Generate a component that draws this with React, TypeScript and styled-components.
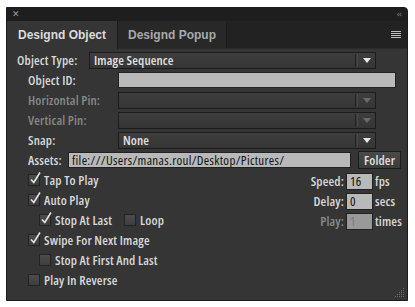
import styled, { createGlobalStyle } from 'styled-components';

const GlobalStyle = createGlobalStyle`
  html, body {
    margin: 0;
    padding: 0;
    background: #ffffff;
  }
  body {
    font-family: "Open Sans", "Liberation Sans", Arial, sans-serif;
    font-stretch: 75%;
  }
`;

const Panel = styled.div`
  position: relative;
  box-sizing: border-box;
  margin: 7px 0 0 6px;
  width: 402px;
  height: 294px;
  background: #353535;
  border: 1px solid #1b1b1b;
  border-top-right-radius: 4px;
  display: flex;
  flex-direction: column;
  overflow: hidden;
`;

const TitleBar = styled.div`
  height: 13px;
  background: #1e1e1e;
  display: flex;
  align-items: center;
  justify-content: space-between;
  padding: 0 6px 0 5px;
  color: #9a9a9a;
  font-family: "DejaVu Sans", sans-serif;
  font-stretch: normal;
  font-size: 9px;
  line-height: 13px;
`;

const Collapse = styled.span`
  font-size: 8px;
  letter-spacing: -1px;
  color: #8a8a8a;
`;

const TabStrip = styled.div`
  height: 27px;
  background: #222222;
  border-bottom: 1px solid #2a2a2a;
  display: flex;
  align-items: stretch;
`;

const Tab = styled.div<{ $active?: boolean; $width: number }>`
  width: ${(p) => p.$width}px;
  box-sizing: border-box;
  display: flex;
  align-items: center;
  justify-content: center;
  font-family: "Liberation Sans", Arial, sans-serif;
  font-stretch: normal;
  font-weight: bold;
  font-size: 12px;
  color: ${(p) => (p.$active ? '#dcdcdc' : '#a8a8a8')};
  background: ${(p) => (p.$active ? '#353535' : '#282828')};
  border-right: 1px solid #1a1a1a;
  margin-bottom: ${(p) => (p.$active ? '-1px' : '0')};
`;

const MenuButton = styled.div`
  margin-left: auto;
  margin-right: 6px;
  align-self: center;
  width: 10px;
  display: flex;
  flex-direction: column;
  gap: 1px;
  span {
    display: block;
    height: 1px;
    background: #bdbdbd;
  }
`;

const Body = styled.div`
  padding-top: 1px;
  display: flex;
  flex-direction: column;
  color: #d8d8d8;
  font-size: 13px;
  font-weight: 600;
  letter-spacing: 0.15px;
`;

const Row = styled.div<{ $indent: number }>`
  height: 20px;
  display: flex;
  align-items: center;
  padding-left: ${(p) => p.$indent}px;
`;

const Label = styled.div<{ $width: number; $disabled?: boolean }>`
  width: ${(p) => p.$width}px;
  flex: none;
  color: ${(p) => (p.$disabled ? '#888888' : '#d8d8d8')};
  white-space: nowrap;
`;

const Select = styled.div`
  flex: 1;
  margin-right: 31px;
  height: 17px;
  box-sizing: border-box;
  border: 1px solid #1c1c1c;
  background: linear-gradient(#3e3e3e, #353535);
  display: flex;
  align-items: center;
  padding-left: 4px;
  color: #e0e0e0;
`;

const SelectValue = styled.span`
  flex: 1;
`;

const SelectDivider = styled.span`
  width: 3px;
  height: 13px;
  border-left: 1px solid #222;
  border-right: 1px solid #4a4a4a;
  box-sizing: border-box;
`;

const SelectArrow = styled.span<{ $disabled?: boolean }>`
  width: 17px;
  display: flex;
  justify-content: center;
  &::after {
    content: '';
    border-left: 4px solid transparent;
    border-right: 4px solid transparent;
    border-top: 5px solid ${(p) => (p.$disabled ? '#6a6a6a' : '#e6e6e6')};
  }
`;

const TextInput = styled.div<{ $right: number }>`
  flex: 1;
  margin-right: ${(p) => p.$right}px;
  height: 16px;
  box-sizing: border-box;
  border: 1px solid #222;
  background: #b9b9b9;
  color: #111;
  font-weight: 400;
  letter-spacing: 0.35px;
  padding-left: 3px;
  line-height: 14px;
  white-space: nowrap;
  overflow: hidden;
`;

const FolderButton = styled.div`
  width: 43px;
  height: 18px;
  box-sizing: border-box;
  margin-left: 7px;
  margin-right: 6px;
  border: 1px solid #1c1c1c;
  background: linear-gradient(#4a4a4a, #3b3b3b);
  color: #e0e0e0;
  display: flex;
  align-items: center;
  justify-content: center;
`;

const Options = styled.div`
  display: flex;
  align-items: flex-start;
`;

const CheckList = styled.div`
  flex: 1;
  display: flex;
  flex-direction: column;
`;

const CheckGroup = styled.div`
  display: flex;
  align-items: center;
  gap: 12px;
`;

const CheckItem = styled.label`
  display: flex;
  align-items: center;
  gap: 4px;
  white-space: nowrap;
`;

const Box = styled.span`
  position: relative;
  width: 12px;
  height: 12px;
  box-sizing: border-box;
  border: 1px solid #222;
  background: linear-gradient(#4c4c4c, #3e3e3e);
  svg {
    position: absolute;
    left: 0;
    top: -3px;
    overflow: visible;
  }
`;

const NumberFields = styled.div`
  display: grid;
  grid-template-columns: auto 27px 28px;
  grid-auto-rows: 20px;
  column-gap: 2px;
  align-items: center;
  margin-right: 4px;
  margin-top: 1px;
`;

const FieldLabel = styled.span<{ $disabled?: boolean }>`
  text-align: right;
  color: ${(p) => (p.$disabled ? '#8a8a8a' : '#d8d8d8')};
`;

const NumberInput = styled.div<{ $disabled?: boolean }>`
  height: 17px;
  box-sizing: border-box;
  border: 1px solid #222;
  background: ${(p) => (p.$disabled ? '#999999' : '#b9b9b9')};
  color: ${(p) => (p.$disabled ? '#7a7a7a' : '#111')};
  font-weight: 400;
  padding-left: 3px;
  line-height: 15px;
`;

const Unit = styled.span`
  color: #d8d8d8;
`;

const Grip = styled.svg`
  position: absolute;
  right: 2px;
  bottom: 2px;
`;

function Check({ checked, label }: { checked?: boolean; label: string }) {
  return (
    <CheckItem>
      <Box>
        {checked && (
          <svg width="12" height="12" viewBox="0 0 12 12">
            <path d="M2 7.5 L4.8 10.5 L11 0.5" fill="none" stroke="#e4e4e4" strokeWidth="1.6" />
          </svg>
        )}
      </Box>
      {label}
    </CheckItem>
  );
}

function Dropdown({ value, disabled }: { value?: string; disabled?: boolean }) {
  return (
    <Select>
      <SelectValue>{value}</SelectValue>
      <SelectDivider />
      <SelectArrow $disabled={disabled} />
    </Select>
  );
}

export default function App() {
  const gripDots: [number, number][] = [];
  for (let r = 0; r < 5; r++) {
    for (let c = 0; c <= r; c++) {
      gripDots.push([8 - c * 2, r * 2]);
    }
  }

  return (
    <>
      <GlobalStyle />
      <Panel>
        <TitleBar>
          <span>✕</span>
          <Collapse>‹‹</Collapse>
        </TitleBar>
        <TabStrip>
          <Tab $active $width={111}>Designd Object</Tab>
          <Tab $width={109}>Designd Popup</Tab>
          <MenuButton>
            <span />
            <span />
            <span />
            <span />
          </MenuButton>
        </TabStrip>
        <Body>
          <Row $indent={10}>
            <Label $width={72}>Object Type:</Label>
            <Dropdown value="Image Sequence" />
          </Row>
          <Row $indent={21}>
            <Label $width={90}>Object ID:</Label>
            <TextInput $right={11} />
          </Row>
          <Row $indent={21}>
            <Label $width={90} $disabled>Horizontal Pin:</Label>
            <Dropdown disabled />
          </Row>
          <Row $indent={21}>
            <Label $width={90} $disabled>Vertical Pin:</Label>
            <Dropdown disabled />
          </Row>
          <Row $indent={21}>
            <Label $width={90}>Snap:</Label>
            <Dropdown value="None" />
          </Row>
          <Row $indent={21}>
            <Label $width={40}>Assets:</Label>
            <TextInput $right={0}>file:///Users/manas.roul/Desktop/Pictures/</TextInput>
            <FolderButton>Folder</FolderButton>
          </Row>
          <Options>
            <CheckList>
              <Row $indent={21}>
                <Check checked label="Tap To Play" />
              </Row>
              <Row $indent={21}>
                <Check checked label="Auto Play" />
              </Row>
              <Row $indent={32}>
                <CheckGroup>
                  <Check checked label="Stop At Last" />
                  <Check label="Loop" />
                </CheckGroup>
              </Row>
              <Row $indent={21}>
                <Check checked label="Swipe For Next Image" />
              </Row>
              <Row $indent={32}>
                <Check label="Stop At First And Last" />
              </Row>
              <Row $indent={21}>
                <Check label="Play In Reverse" />
              </Row>
            </CheckList>
            <NumberFields>
              <FieldLabel>Speed:</FieldLabel>
              <NumberInput>16</NumberInput>
              <Unit>fps</Unit>
              <FieldLabel>Delay:</FieldLabel>
              <NumberInput>0</NumberInput>
              <Unit>secs</Unit>
              <FieldLabel $disabled>Play:</FieldLabel>
              <NumberInput $disabled>1</NumberInput>
              <Unit>times</Unit>
            </NumberFields>
          </Options>
        </Body>
        <Grip width="10" height="10" viewBox="0 0 10 10">
          {gripDots.map(([x, y], i) => (
            <rect key={i} x={x} y={y} width="1" height="1" fill="#6a6a6a" />
          ))}
        </Grip>
      </Panel>
    </>
  );
}
